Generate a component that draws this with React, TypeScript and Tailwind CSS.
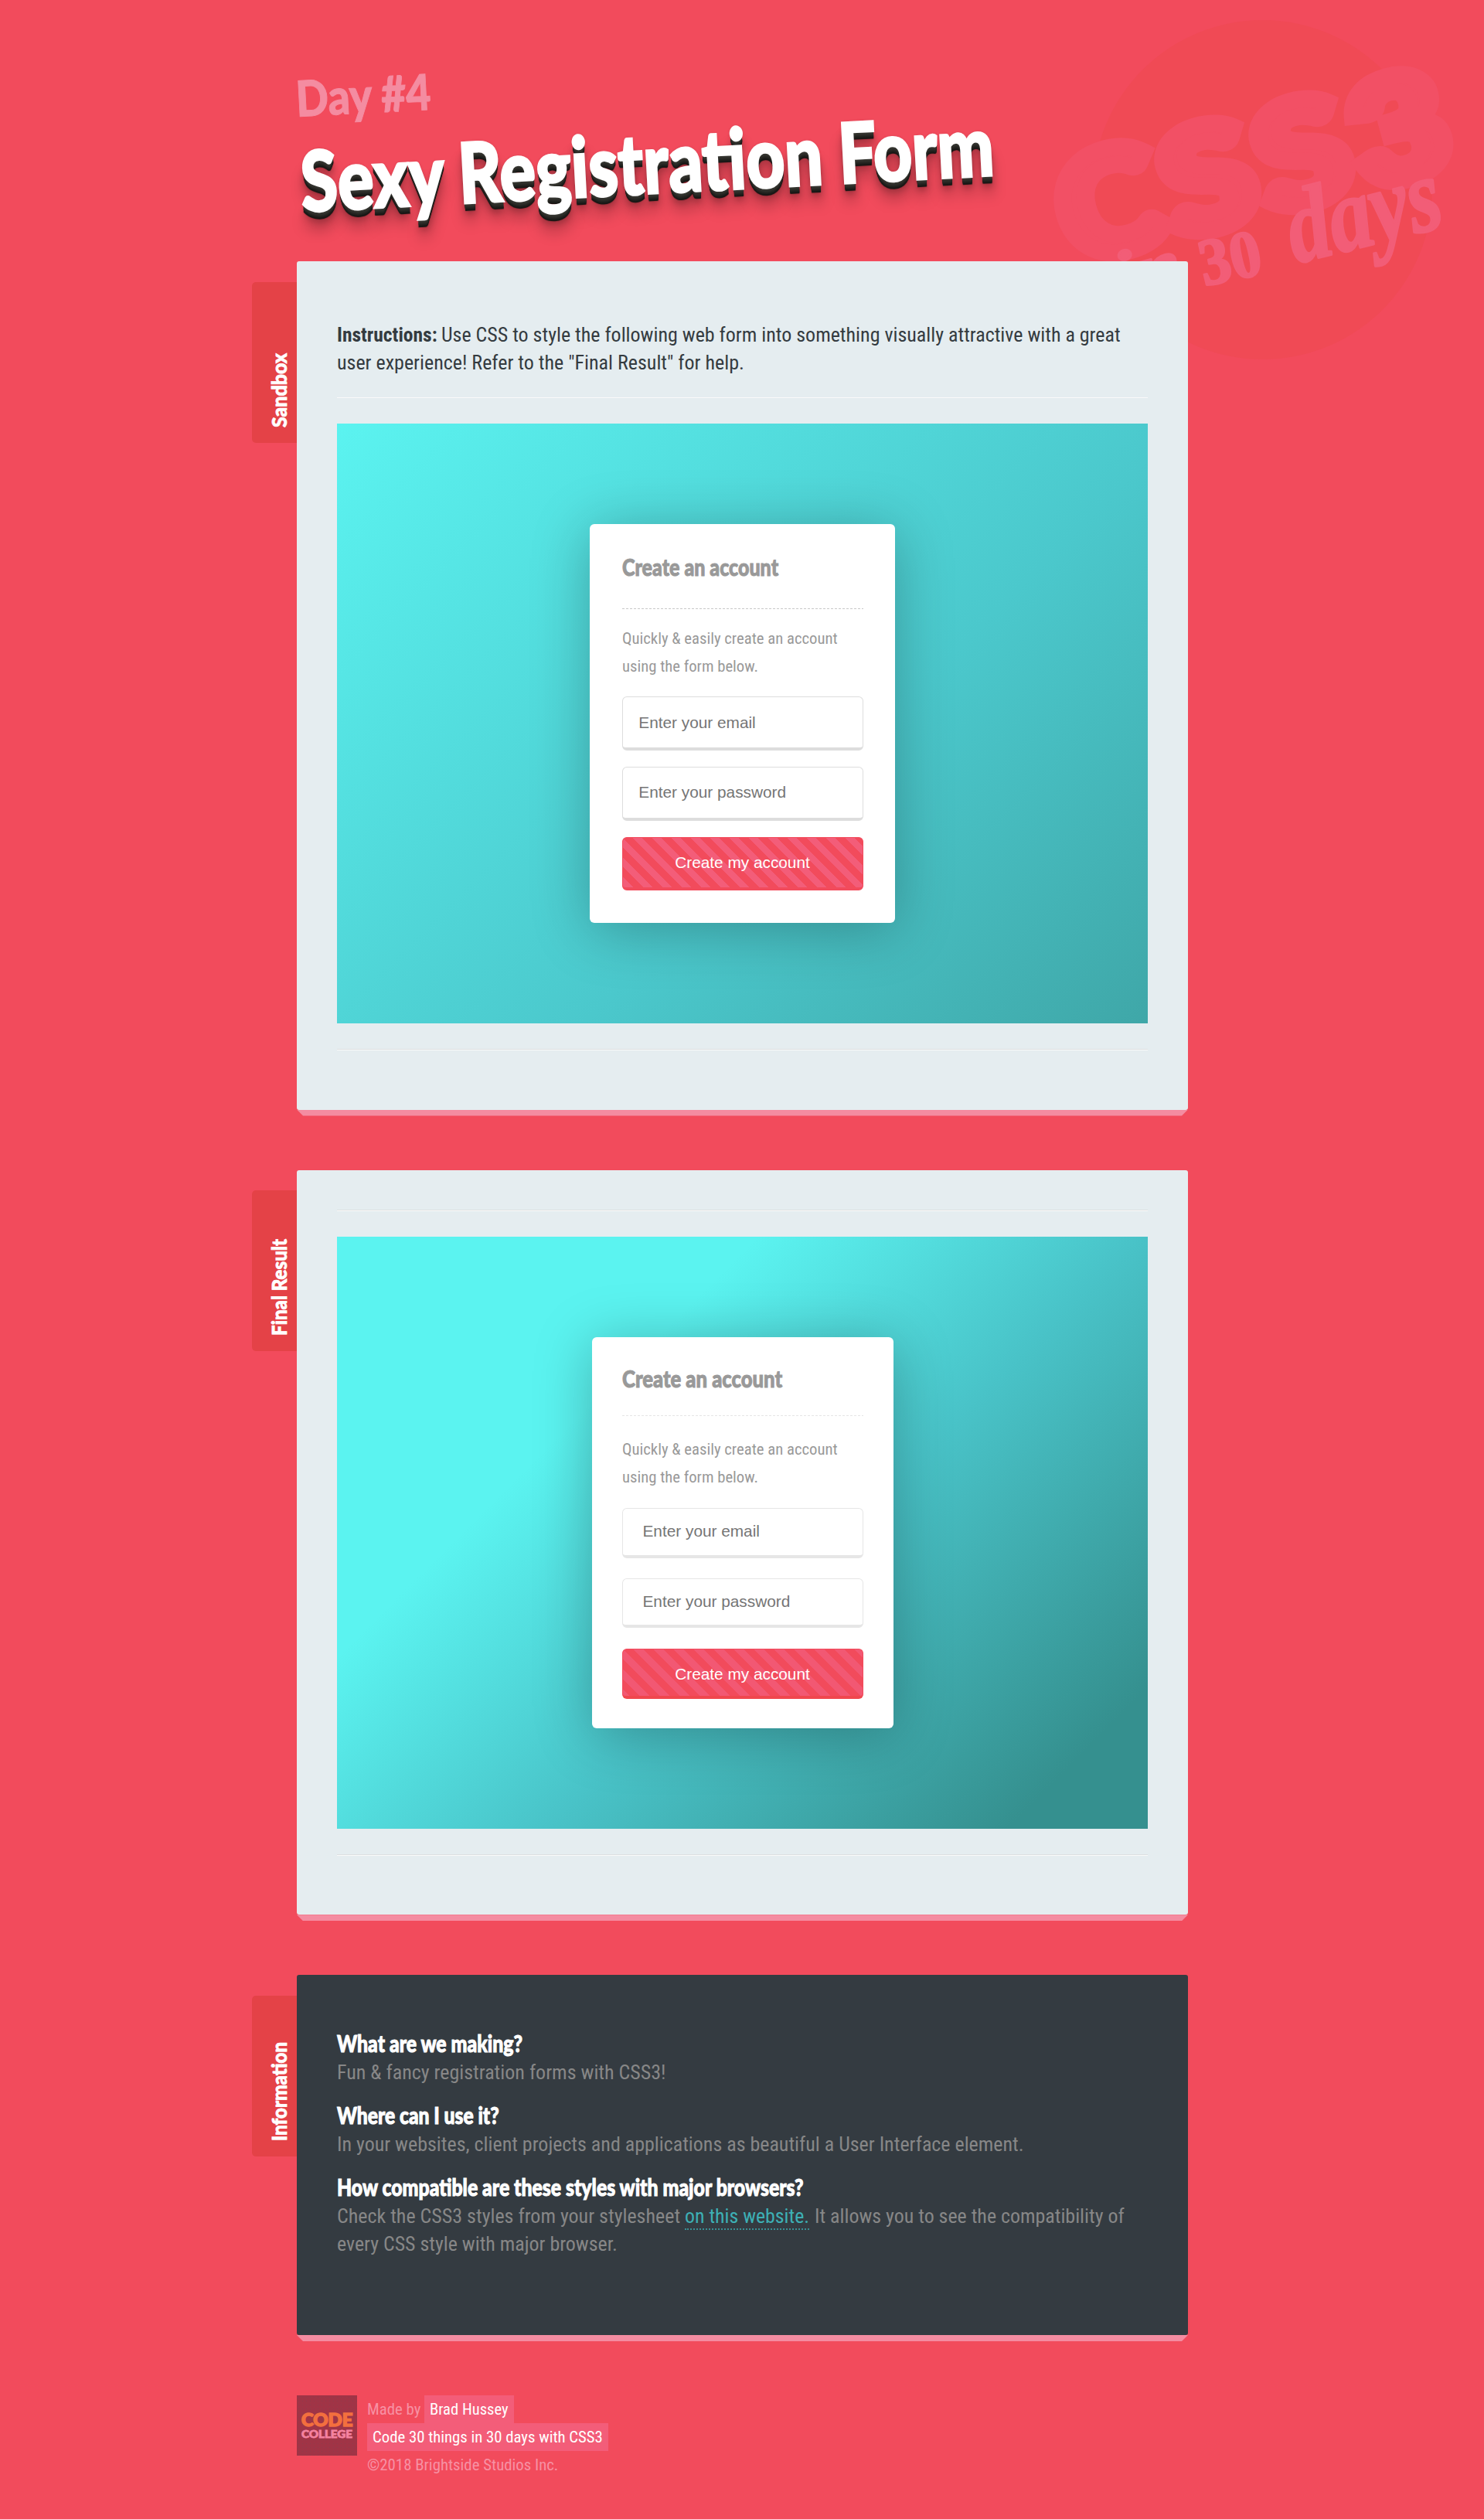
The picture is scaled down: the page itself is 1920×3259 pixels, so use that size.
import { useLayoutEffect, useRef, useState, type ReactNode } from "react";

/** One line of text, condensed or widened horizontally to a given width. */
function Fit({ w, className = "", children }: { w: number; className?: string; children: ReactNode }) {
  const ref = useRef<HTMLSpanElement>(null);
  const [scale, setScale] = useState(1);
  useLayoutEffect(() => {
    if (ref.current) setScale(w / ref.current.offsetWidth);
  }, [w]);
  return (
    <span className={"inline-block shrink-0 " + className} style={{ width: w }}>
      <span ref={ref} className="inline-block origin-left whitespace-nowrap" style={{ transform: `scaleX(${scale})` }}>
        {children}
      </span>
    </span>
  );
}

function Badge() {
  return (
    <svg className="absolute right-0 top-0 h-[500px] w-[600px]" viewBox="1320 0 600 500" aria-label="CSS3 in 30 days">
      <circle cx="1633.5" cy="245.5" r="219.5" fill="#f04a55" />
      <g
        fontFamily="Lato"
        fontWeight="900"
        fontSize="184"
        fill="#f25065"
        stroke="#f25065"
        strokeWidth="22"
        textAnchor="middle"
      >
        <text transform="translate(1451 326) rotate(-15)" textLength="130" lengthAdjust="spacingAndGlyphs">C</text>
        <text transform="translate(1579 294) rotate(-15)" textLength="118" lengthAdjust="spacingAndGlyphs">S</text>
        <text transform="translate(1701 262) rotate(-15)" textLength="118" lengthAdjust="spacingAndGlyphs">S</text>
        <text transform="translate(1826 230) rotate(-15)" textLength="124" lengthAdjust="spacingAndGlyphs">3</text>
      </g>
      <g fontFamily="Liberation Serif" fontWeight="700" fill="#f25d77" stroke="#f25d77" strokeWidth="3" strokeLinejoin="round">
        <text transform="translate(1449 388) rotate(-15)" fontSize="88" fontStyle="italic" textLength="88" lengthAdjust="spacingAndGlyphs">in</text>
        <text transform="translate(1558 370) rotate(-12)" fontSize="86" textLength="80" lengthAdjust="spacingAndGlyphs">30</text>
        <text transform="translate(1676 341) rotate(-14)" fontSize="136" fontStyle="italic" textLength="202" lengthAdjust="spacingAndGlyphs">days</text>
      </g>
    </svg>
  );
}

function Tab({ label, w }: { label: string; w: number }) {
  return (
    <div className="absolute -left-[58px] top-[26.5px] flex h-[208px] w-[58px] items-end rounded-l-[5px] bg-[#e44247]">
      <div className="mb-5 ml-[17px] h-[36px] w-[36px]">
        <div className="flex h-[36px] origin-top-left translate-y-[36px] -rotate-90 items-baseline font-[Lato] text-[27px] font-black leading-[36px] text-white [-webkit-text-stroke:0.8px_white]">
          <Fit w={w}>{label}</Fit>
        </div>
      </div>
    </div>
  );
}

function Panel({ label, labelWidth, className, children }: { label: string; labelWidth: number; className: string; children: ReactNode }) {
  return (
    <section className="relative mb-[70px]">
      <Tab label={label} w={labelWidth} />
      <div className={"relative rounded-[3px] px-[52px] " + className}>{children}</div>
      <div className="h-2 bg-[#f48ca1] [clip-path:polygon(0_0,100%_0,calc(100%-8px)_100%,8px_100%)]" />
    </section>
  );
}

function Rule({ className = "" }: { className?: string }) {
  return <div className={"h-[2px] border-b border-t border-b-[#fafafa] border-t-[#dcdfe1] " + className} />;
}

const titleClass =
  "flex items-baseline font-[Lato] text-[30px] font-black leading-[35px] text-[#999999] [-webkit-text-stroke:1px_#999999]";
const copyClass = "font-[Roboto] font-stretch-condensed text-[20.8px] leading-[36px] text-[#999999]";
const fieldClass =
  "block w-full rounded-[6px] border border-b-4 bg-white font-['Liberation_Sans'] text-[20.8px] outline-none placeholder:text-[#757575] placeholder:opacity-100";

function SandboxForm() {
  return (
    <form className="mx-auto h-[515.8px] w-[395.2px] rounded-[6px] bg-white px-[41.6px] pt-[38px] shadow-[0_8px_75px_rgba(0,0,0,0.27)]">
      <div className={"h-[71px] " + titleClass}>
        <Fit w={202}>Create an account</Fit>
      </div>
      <div className="mb-5 h-px bg-[repeating-linear-gradient(90deg,#c8c8c8_0_3px,transparent_3px_5px)]" />
      <div className={copyClass}>
        <div><Fit w={279}>Quickly &amp; easily create an account</Fit></div>
        <div><Fit w={176}>using the form below.</Fit></div>
      </div>
      <input className={"mt-[21px] h-[69.6px] border-[#dddddd] px-[20.8px] pt-[2px] " + fieldClass} placeholder="Enter your email" />
      <input className={"mt-[21.4px] h-[69.6px] border-[#dddddd] px-[20.8px] " + fieldClass} placeholder="Enter your password" />
      <button
        type="button"
        className="mt-[21px] block h-[69.2px] w-full rounded-[6px] border border-b-4 border-[#f24b5c] bg-[#f24b5c] bg-[linear-gradient(45deg,transparent_25%,#f35d79_25%,#f35d79_50%,transparent_50%,transparent_75%,#f35d79_75%)] bg-[size:25px_25px] font-['Liberation_Sans'] text-[20.8px] text-white"
      >
        Create my account
      </button>
    </form>
  );
}

function FinalForm() {
  return (
    <form className="mx-auto h-[506.5px] w-[390px] rounded-[6px] bg-white px-[39px] pt-[36.4px] shadow-[0_8px_75px_rgba(0,0,0,0.27)]">
      <div className={"h-[65px] " + titleClass}>
        <Fit w={207}>Create an account</Fit>
      </div>
      <div className="mb-[24.5px] h-px bg-[repeating-linear-gradient(90deg,#e6e6e6_0_3px,transparent_3px_5px)]" />
      <div className={copyClass}>
        <div><Fit w={279}>Quickly &amp; easily create an account</Fit></div>
        <div><Fit w={176}>using the form below.</Fit></div>
      </div>
      <input className={"mt-[22.4px] h-[64.4px] border-[#e6e6e6] px-[26px] pb-[1px] " + fieldClass} placeholder="Enter your email" />
      <input className={"mt-[26.4px] h-[64.4px] border-[#e6e6e6] px-[26px] pb-[2px] " + fieldClass} placeholder="Enter your password" />
      <button
        type="button"
        className="mt-[26.2px] block h-[65px] w-full rounded-[6px] border border-b-4 border-[#f24b5c] border-b-[#f0474e] bg-[#f24b5c] bg-[linear-gradient(45deg,transparent_25%,#f25873_25%,#f25873_50%,transparent_50%,transparent_75%,#f25873_75%)] bg-[size:26px_26px] pt-[4px] font-['Liberation_Sans'] text-[20.8px] text-white"
      >
        Create my account
      </button>
    </form>
  );
}

function InfoHeading({ w, children }: { w: number; children: ReactNode }) {
  return (
    <div className="h-[39px] font-[Lato] text-[30px] font-black leading-[38px] text-white [-webkit-text-stroke:1px_white]">
      <Fit w={w}>{children}</Fit>
    </div>
  );
}

export default function App() {
  return (
    <div className="relative h-[3259px] overflow-hidden bg-[#f24b5c]">
      <Badge />
      <main className="relative ml-[384px] w-[1153px]">
        <header className="h-[338px] pt-[95px] font-[Lato] font-black">
          <div className="mb-[19px] h-16 origin-[0_57px] -rotate-3 text-[64px] leading-[64px] text-[#f48ca1] [-webkit-text-stroke:1px_#f48ca1]">
            <Fit w={175}>Day #4</Fit>
          </div>
          <h1 className="ml-[7px] h-[108px] origin-[0_96px] -rotate-3 text-[108px] leading-[108px] text-white [-webkit-text-stroke:3px_white] [text-shadow:0_1px_0_#3a3a35,0_2px_0_#383833,0_3px_0_#353530,0_4px_0_#32322d,0_5px_0_#2d2d29,0_6px_0_#282824,0_7px_0_#232320,0_8px_0_#1e1e1b,0_9px_0_#191917,0_10px_1px_#141412,0_0_5px_rgba(0,0,0,0.2),0_14px_10px_rgba(0,0,0,0.25),0_24px_20px_rgba(0,0,0,0.25)]">
            <Fit w={898}>Sexy Registration Form</Fit>
          </h1>
        </header>

        <Panel label="Sandbox" labelWidth={96} className="h-[1097.6px] bg-[#e5edf0] pt-[77px]">
          <div className="font-[Roboto] font-stretch-condensed text-[26px] leading-[36px] text-[#343b40]">
            <div className="flex items-baseline gap-[5px]">
              <Fit w={129.5} className="font-bold">Instructions:</Fit>
              <Fit w={879}>Use CSS to style the following web form into something visually attractive with a great</Fit>
            </div>
            <div><Fit w={527}>user experience! Refer to the "Final Result" for help.</Fit></div>
          </div>
          <Rule className="mt-[26px] !border-t-transparent" />
          <div className="mb-[33px] mt-[33px] h-[775.8px] bg-[linear-gradient(135deg,#5bf3f0,#4bc8cc_60%,#3fa7a8)] pt-[130px]">
            <SandboxForm />
          </div>
          <Rule />
        </Panel>

        <Panel label="Final Result" labelWidth={125} className="h-[963.7px] bg-[#e5edf0] pt-[51.4px]">
          <Rule />
          <div className="mb-[33px] mt-[33px] h-[766.5px] bg-[linear-gradient(135deg,#5bf3f0_30%,#49c3c8_57%,#35908f_90%)] pt-[130px]">
            <FinalForm />
          </div>
          <Rule />
        </Panel>

        <Panel label="Information" labelWidth={128} className="h-[465.8px] bg-[#343b41] pt-[69.2px]">
          <div className="flex flex-col gap-[18px] font-[Roboto] font-stretch-condensed text-[26px] leading-[36px] text-[#878787]">
            <div>
              <InfoHeading w={240}>What are we making?</InfoHeading>
              <div className="h-9"><Fit w={426}>Fun &amp; fancy registration forms with CSS3!</Fit></div>
            </div>
            <div>
              <InfoHeading w={210}>Where can I use it?</InfoHeading>
              <div className="h-9"><Fit w={889}>In your websites, client projects and applications as beautiful a User Interface element.</Fit></div>
            </div>
            <div>
              <InfoHeading w={604}>How compatible are these styles with major browsers?</InfoHeading>
              <div className="flex h-9 items-baseline">
                <Fit w={444}>Check the CSS3 styles from your stylesheet</Fit>
                <a className="ml-[6px] h-[36px] border-b-2 border-dotted border-[#3a8f94] text-[#3db0b5]">
                  <Fit w={161}>on this website.</Fit>
                </a>
                <Fit w={401} className="ml-[7px]">It allows you to see the compatibility of</Fit>
              </div>
              <div className="h-9"><Fit w={363}>every CSS style with major browser.</Fit></div>
            </div>
          </div>
        </Panel>

        <footer className="flex gap-[13px] font-[Roboto] font-stretch-condensed text-[20.8px] leading-[36px] text-[#f791a4]">
          <div className="flex h-[78px] w-[78px] flex-col items-center bg-[#a03446] bg-[radial-gradient(#8f3c4c_0.8px,transparent_1px)] bg-[size:5px_5px] pt-[21px] font-[Lato] font-black">
            <div className="h-[22px] text-[22px] leading-[21px] text-[#f36f3e] [-webkit-text-stroke:1.5px_#f36f3e]"><Fit w={66}>CODE</Fit></div>
            <div className="h-[14px] text-[14px] leading-[14px] text-[#f583a0] [-webkit-text-stroke:0.8px_#f583a0]"><Fit w={66}>COLLEGE</Fit></div>
          </div>
          <div>
            <div className="flex h-9 items-baseline">
              <Fit w={69}>Made by</Fit>
              <a className="ml-[5px] bg-[#f35d79] px-[7px] text-white"><Fit w={102}>Brad Hussey</Fit></a>
            </div>
            <div className="flex h-9 items-baseline">
              <a className="bg-[#f35d79] px-[7px] text-white"><Fit w={298}>Code 30 things in 30 days with CSS3</Fit></a>
            </div>
            <div className="h-9"><Fit w={247}>©2018 Brightside Studios Inc.</Fit></div>
          </div>
        </footer>
      </main>
    </div>
  );
}
